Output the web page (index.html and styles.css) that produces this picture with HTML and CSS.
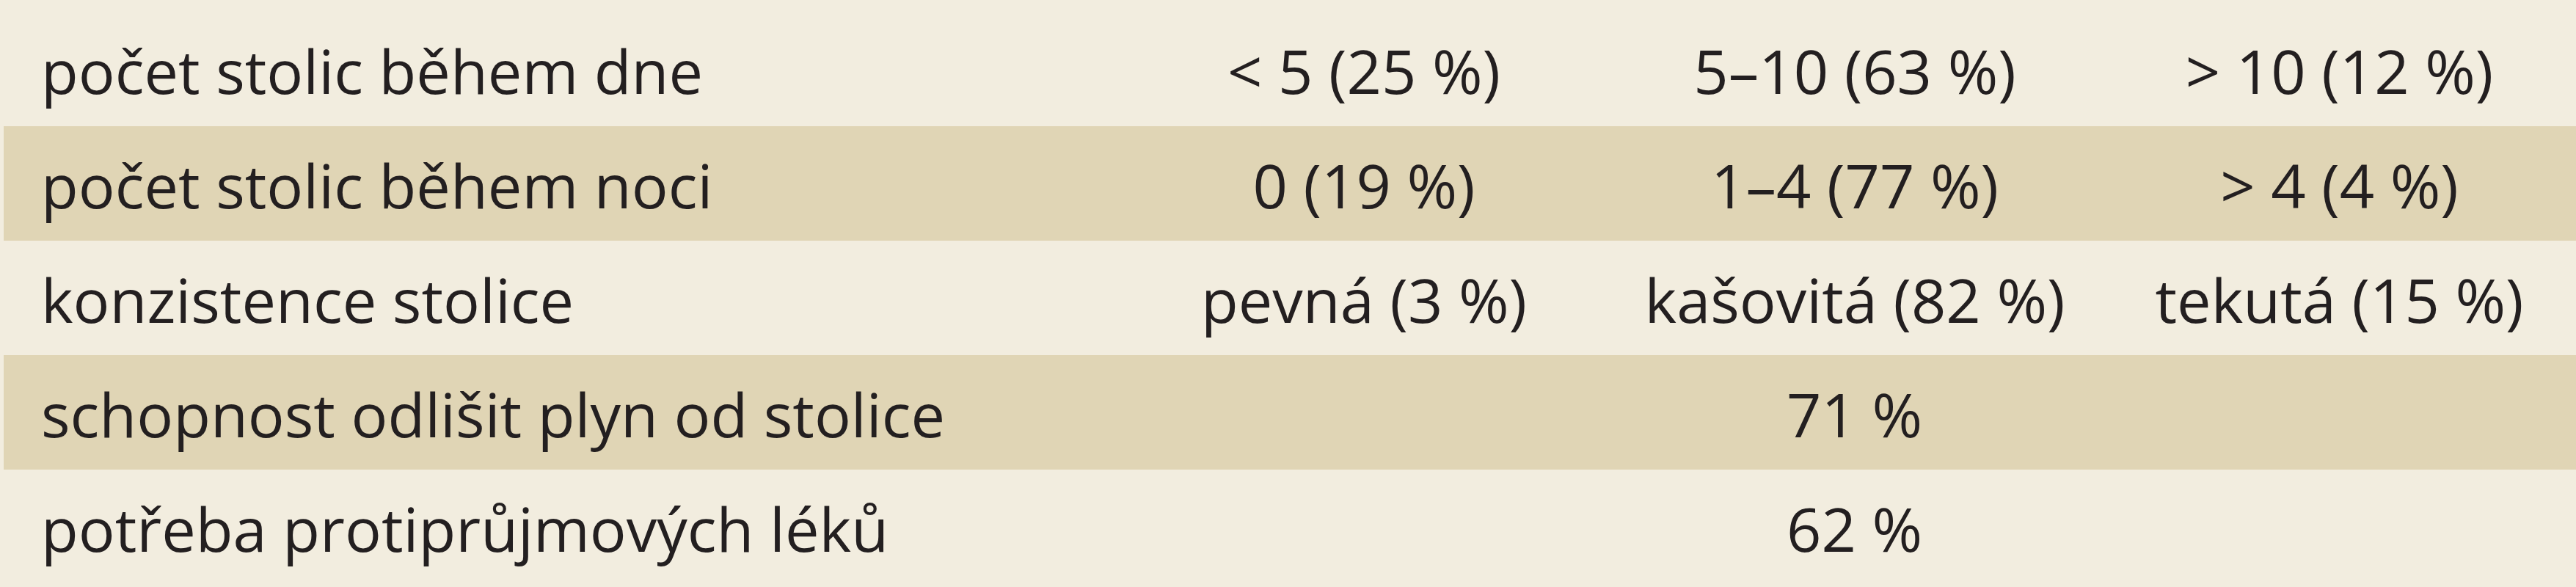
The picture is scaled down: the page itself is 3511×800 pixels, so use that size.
FILE: index.html
```html
<!DOCTYPE html>
<html lang="cs">
<head>
<meta charset="utf-8">
<title>Tabulka</title>
<link rel="stylesheet" href="styles.css">
</head>
<body>
<div class="table">
  <div class="row">
    <div class="label">počet stolic během dne</div>
    <div class="val">&lt; 5 (25 %)</div>
    <div class="val">5–10 (63 %)</div>
    <div class="val">&gt; 10 (12 %)</div>
  </div>
  <div class="row alt">
    <div class="label">počet stolic během noci</div>
    <div class="val">0 (19 %)</div>
    <div class="val">1–4 (77 %)</div>
    <div class="val">&gt; 4 (4 %)</div>
  </div>
  <div class="row">
    <div class="label">konzistence stolice</div>
    <div class="val">pevná (3 %)</div>
    <div class="val">kašovitá (82 %)</div>
    <div class="val">tekutá (15 %)</div>
  </div>
  <div class="row alt">
    <div class="label">schopnost odlišit plyn od stolice</div>
    <div class="val span">71 %</div>
  </div>
  <div class="row">
    <div class="label">potřeba protiprůjmových léků</div>
    <div class="val span">62 %</div>
  </div>
</div>
</body>
</html>
```
FILE: styles.css
```css
html, body {
  margin: 0;
  padding: 0;
  background: #f2eddf;
}
body {
  padding-top: 16px;
  padding-left: 5px;
  font-family: "Open Sans", "Noto Sans", sans-serif;
  font-size: 83px;
  color: #231f20;
}
.table {
  display: flex;
  flex-direction: column;
}
.row {
  display: grid;
  grid-template-columns: 1523px 662px 676px 1fr;
  height: 156px;
  line-height: 152px;
  padding-top: 4px;
  box-sizing: border-box;
  white-space: nowrap;
}
.row.alt {
  background: #e0d5b5;
}
.label {
  padding-left: 51px;
}
.val {
  text-align: center;
}
.val.span {
  grid-column: 2 / -1;
  padding-left: 16px;
}
```
